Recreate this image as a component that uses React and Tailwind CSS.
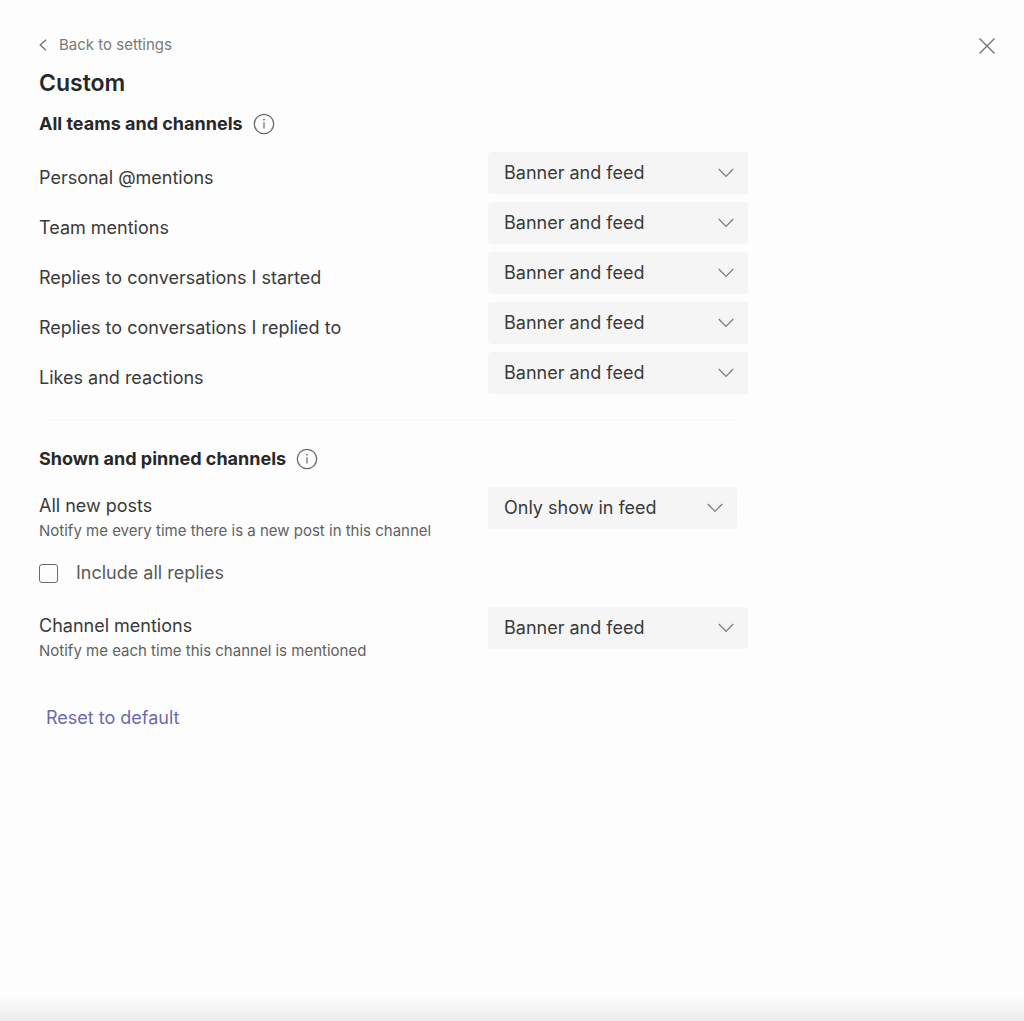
import React from "react";

const OPTIONS = ["Banner and feed", "Only show in feed", "Off"];

const TEAM_ROWS = [
  { id: "personal", label: "Personal @mentions" },
  { id: "team", label: "Team mentions" },
  { id: "started", label: "Replies to conversations I started" },
  { id: "replied", label: "Replies to conversations I replied to" },
  { id: "likes", label: "Likes and reactions" },
];

function Select({ id, value = "Banner and feed", narrow = false }) {
  return (
    <div className={narrow ? "relative w-full max-w-[249px]" : "relative w-full max-w-[260px]"}>
      <select
        id={id}
        defaultValue={value}
        className="block h-[42px] w-full appearance-none rounded-sm bg-[#f5f5f5] pr-10 pl-4 text-lg text-[#3a3a3a]"
      >
        {OPTIONS.map((option) => (
          <option key={option}>{option}</option>
        ))}
      </select>
      <svg
        viewBox="0 0 16 10"
        className="pointer-events-none absolute top-4 right-[14px] h-[10px] w-4"
        fill="none"
        stroke="#7a7a7a"
        strokeWidth="1.2"
        aria-hidden="true"
      >
        <path d="M0.8 1 8 8.4 15.2 1" />
      </svg>
    </div>
  );
}

function SectionHeading({ children }) {
  return (
    <div className="flex items-center gap-[10px]">
      <h2 className="text-lg leading-6 font-bold text-[#282828]">{children}</h2>
      <button type="button" aria-label={`About ${children}`} className="size-[22px]">
        <svg viewBox="0 0 22 22" fill="none" stroke="#6b6b6b" aria-hidden="true">
          <circle cx="11" cy="11" r="9.7" strokeWidth="1.3" />
          <path d="M11 9.3v6.2" strokeWidth="1.2" />
          <circle cx="11" cy="6.7" r="0.85" fill="#6b6b6b" stroke="none" />
        </svg>
      </button>
    </div>
  );
}

function Setting({ id, label, note, value, narrow }) {
  return (
    <div className="grid grid-cols-[449px_1fr] items-start">
      <div className={note ? "pt-[7px]" : "pt-[14px]"}>
        <label htmlFor={id} className="block text-lg leading-6 text-[#3a3a3a]">
          {label}
        </label>
        {note && <p className="mt-[3px] text-[15px] leading-5 text-[#626262]">{note}</p>}
      </div>
      <Select id={id} value={value} narrow={narrow} />
    </div>
  );
}

export default function App() {
  return (
    <div className="flex min-h-screen flex-col bg-[#fdfdfd] font-['Inter','Liberation_Sans',sans-serif]">
      <main className="flex-1 pt-[33px] pr-7 pl-[39px]">
        <header className="flex items-start justify-between">
          <a href="#settings" className="flex items-center gap-3 text-[15px] leading-6 text-[#7a7a7a]">
            <svg viewBox="0 0 8 12" className="h-3 w-2" fill="none" stroke="#6b6b6b" strokeWidth="1.2" aria-hidden="true">
              <path d="M7 0.8 1.2 6 7 11.2" />
            </svg>
            Back to settings
          </a>
          <button type="button" aria-label="Close" className="mt-1 size-[18px]">
            <svg viewBox="0 0 18 18" fill="none" stroke="#737373" strokeWidth="1.4" aria-hidden="true">
              <path d="M1.5 1.5 16.5 16.5M16.5 1.5 1.5 16.5" />
            </svg>
          </button>
        </header>

        <h1 className="mt-[10px] text-[23px] leading-8 font-semibold text-[#282828]">Custom</h1>

        <section className="mt-[13px]">
          <SectionHeading>All teams and channels</SectionHeading>
          <div className="mt-4 flex flex-col gap-2">
            {TEAM_ROWS.map((row) => (
              <Setting key={row.id} id={row.id} label={row.label} />
            ))}
          </div>
        </section>

        <hr className="mt-[25px] mr-4 ml-2 max-w-[688px] border-t-2 border-[#f9f9f9]" />

        <section className="mt-[26px]">
          <SectionHeading>Shown and pinned channels</SectionHeading>
          <div className="mt-4">
            <Setting
              id="posts"
              label="All new posts"
              note="Notify me every time there is a new post in this channel"
              value="Only show in feed"
              narrow
            />
          </div>
          <label className="mt-5 flex w-fit items-center gap-[18px] text-lg leading-6 text-[#5a5a5a]">
            <input
              type="checkbox"
              className="size-[19px] appearance-none rounded-[3px] border-[1.5px] border-[#6a6a6a] checked:bg-[#6264a7]"
            />
            Include all replies
          </label>
          <div className="mt-[22px]">
            <Setting id="channel" label="Channel mentions" note="Notify me each time this channel is mentioned" />
          </div>
        </section>

        <button type="button" className="mt-[45px] ml-[7px] text-lg leading-6 text-[#6f68b0]">
          Reset to default
        </button>
      </main>
      <div className="h-6 bg-linear-to-b from-[#fdfdfd] to-[#ebebeb]" />
    </div>
  );
}
